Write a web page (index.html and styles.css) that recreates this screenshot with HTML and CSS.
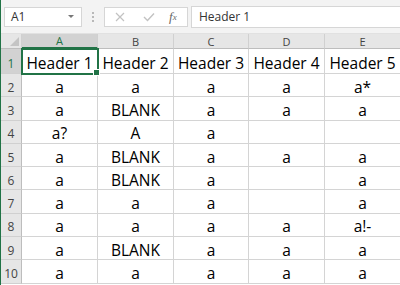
FILE: index.html
```html
<!DOCTYPE html>
<html lang="en">
<head>
    <meta charset="UTF-8">
    <title>Sheet</title>
    <link rel="stylesheet" href="styles.css">
</head>
<body>
    <!-- Name box and formula bar -->
    <div class="toolbar">
        <div class="name-box">
            <span>A1</span>
            <span class="drop"></span>
        </div>
        <div class="grip">
            <span></span><span></span><span></span>
        </div>
        <div class="fx-buttons">
            <svg class="fx-icon" width="10" height="10" viewBox="0 0 10 10">
                <path d="M1 1 L9 9 M9 1 L1 9" stroke="#c2c2c2" stroke-width="1.2" fill="none"/>
            </svg>
            <svg class="fx-icon" width="12" height="10" viewBox="0 0 12 10">
                <path d="M1 5 L4.5 8.5 L11 1.5" stroke="#c2c2c2" stroke-width="1.4" fill="none"/>
            </svg>
            <span class="fx">f<sub>x</sub></span>
        </div>
        <div class="formula">Header 1</div>
    </div>

    <!-- Sheet grid -->
    <div class="sheet">
        <div class="corner"><span class="tri"></span></div>
        <div class="col-head selected">A</div>
        <div class="col-head">B</div>
        <div class="col-head">C</div>
        <div class="col-head">D</div>
        <div class="col-head">E</div>

        <div class="row-head selected">1</div>
        <div class="cell active">Header 1</div>
        <div class="cell">Header 2</div>
        <div class="cell">Header 3</div>
        <div class="cell">Header 4</div>
        <div class="cell">Header 5</div>

        <div class="row-head">2</div>
        <div class="cell">a</div><div class="cell">a</div><div class="cell">a</div><div class="cell">a</div><div class="cell">a*</div>

        <div class="row-head">3</div>
        <div class="cell">a</div><div class="cell">BLANK</div><div class="cell">a</div><div class="cell">a</div><div class="cell">a</div>

        <div class="row-head">4</div>
        <div class="cell">a?</div><div class="cell">A</div><div class="cell">a</div><div class="cell"></div><div class="cell"></div>

        <div class="row-head">5</div>
        <div class="cell">a</div><div class="cell">BLANK</div><div class="cell">a</div><div class="cell">a</div><div class="cell">a</div>

        <div class="row-head">6</div>
        <div class="cell">a</div><div class="cell">BLANK</div><div class="cell">a</div><div class="cell"></div><div class="cell">a</div>

        <div class="row-head">7</div>
        <div class="cell">a</div><div class="cell">a</div><div class="cell">a</div><div class="cell"></div><div class="cell">a</div>

        <div class="row-head">8</div>
        <div class="cell">a</div><div class="cell">a</div><div class="cell">a</div><div class="cell">a</div><div class="cell">a!-</div>

        <div class="row-head">9</div>
        <div class="cell">a</div><div class="cell">BLANK</div><div class="cell">a</div><div class="cell">a</div><div class="cell">a</div>

        <div class="row-head">10</div>
        <div class="cell">a</div><div class="cell">a</div><div class="cell">a</div><div class="cell">a</div><div class="cell">a</div>
    </div>
</body>
</html>
```

FILE: styles.css
```css
/* Page frame */
body {
    margin: 0;
    width: 400px;
    height: 285px;
    overflow: hidden;
    background: #ffffff;
    border-left: 1px solid #217346;
    box-sizing: border-box;
    font-family: "Open Sans", Arial, sans-serif;
}

/* Top bar */
.toolbar {
    height: 34px;
    display: flex;
    align-items: center;
    padding-left: 3px;
    background: #f3f3f3;
    box-sizing: border-box;
    border-bottom: 1px solid #e1e1e1;
}

.name-box {
    width: 78px;
    height: 20px;
    display: flex;
    align-items: center;
    justify-content: space-between;
    padding: 0 7px 0 6px;
    box-sizing: border-box;
    background: #fff;
    border: 1px solid #d6d6d6;
    font-size: 12px;
    color: #333;
}

.drop {
    width: 0;
    height: 0;
    border-left: 3px solid transparent;
    border-right: 3px solid transparent;
    border-top: 3px solid #777;
}

.grip {
    width: 22px;
    display: flex;
    flex-direction: column;
    align-items: center;
    gap: 2px;
}

.grip span {
    width: 2px;
    height: 2px;
    background: #b8b8b8;
}

.fx-buttons {
    width: 84px;
    height: 20px;
    display: flex;
    align-items: center;
    gap: 0;
    padding-left: 10px;
    box-sizing: border-box;
    background: #fff;
    border: 1px solid #d6d6d6;
}

.fx-buttons svg:first-child {
    margin-right: 18px;
}

.fx-buttons svg:nth-child(2) {
    margin-right: 14px;
}

.fx {
    font-family: "Liberation Serif", serif;
    font-style: italic;
    font-size: 13px;
    color: #666;
}

.fx sub {
    font-size: 9px;
    vertical-align: 1px;
}

.formula {
    flex: 1;
    height: 20px;
    margin-left: 3px;
    padding-left: 7px;
    display: flex;
    align-items: center;
    background: #fff;
    border: 1px solid #d6d6d6;
    border-right: none;
    font-size: 12px;
    color: #333;
}

/* Grid */
.sheet {
    display: grid;
    grid-template-columns: 21px 76px 76px 75px 76px 76px;
    grid-template-rows: 15px 25px repeat(9, 23.3px);
}

.corner,
.col-head,
.row-head {
    background: #e6e6e6;
    color: #444;
    font-size: 11px;
    display: flex;
    align-items: center;
    justify-content: center;
    box-sizing: border-box;
}

.corner {
    border-right: 1px solid #d0d0d0;
    border-bottom: 1px solid #bdbdbd;
    position: relative;
}

.tri {
    position: absolute;
    right: 2px;
    bottom: 2px;
    width: 0;
    height: 0;
    border-left: 9px solid transparent;
    border-bottom: 9px solid #c4c4c4;
}

.col-head {
    border-right: 1px solid #d0d0d0;
    border-bottom: 1px solid #bdbdbd;
}

.row-head {
    border-right: 1px solid #bdbdbd;
    border-bottom: 1px solid #d0d0d0;
    font-size: 12px;
    padding-top: 4px;
}

.col-head.selected,
.row-head.selected {
    background: #d2d2d2;
    color: #217346;
}

.col-head.selected {
    border-bottom: 2px solid #217346;
}

.cell {
    border-right: 1px solid #d4d4d4;
    border-bottom: 1px solid #d4d4d4;
    box-sizing: border-box;
    display: flex;
    align-items: center;
    justify-content: center;
    padding-top: 3px;
    font-size: 15.5px;
    color: #000;
    white-space: nowrap;
}

.cell.active {
    position: relative;
    outline: 2px solid #217346;
    outline-offset: -1px;
}

.cell.active::after {
    content: "";
    position: absolute;
    right: -3px;
    bottom: -3px;
    width: 5px;
    height: 5px;
    background: #217346;
    border: 1px solid #fff;
}
```
